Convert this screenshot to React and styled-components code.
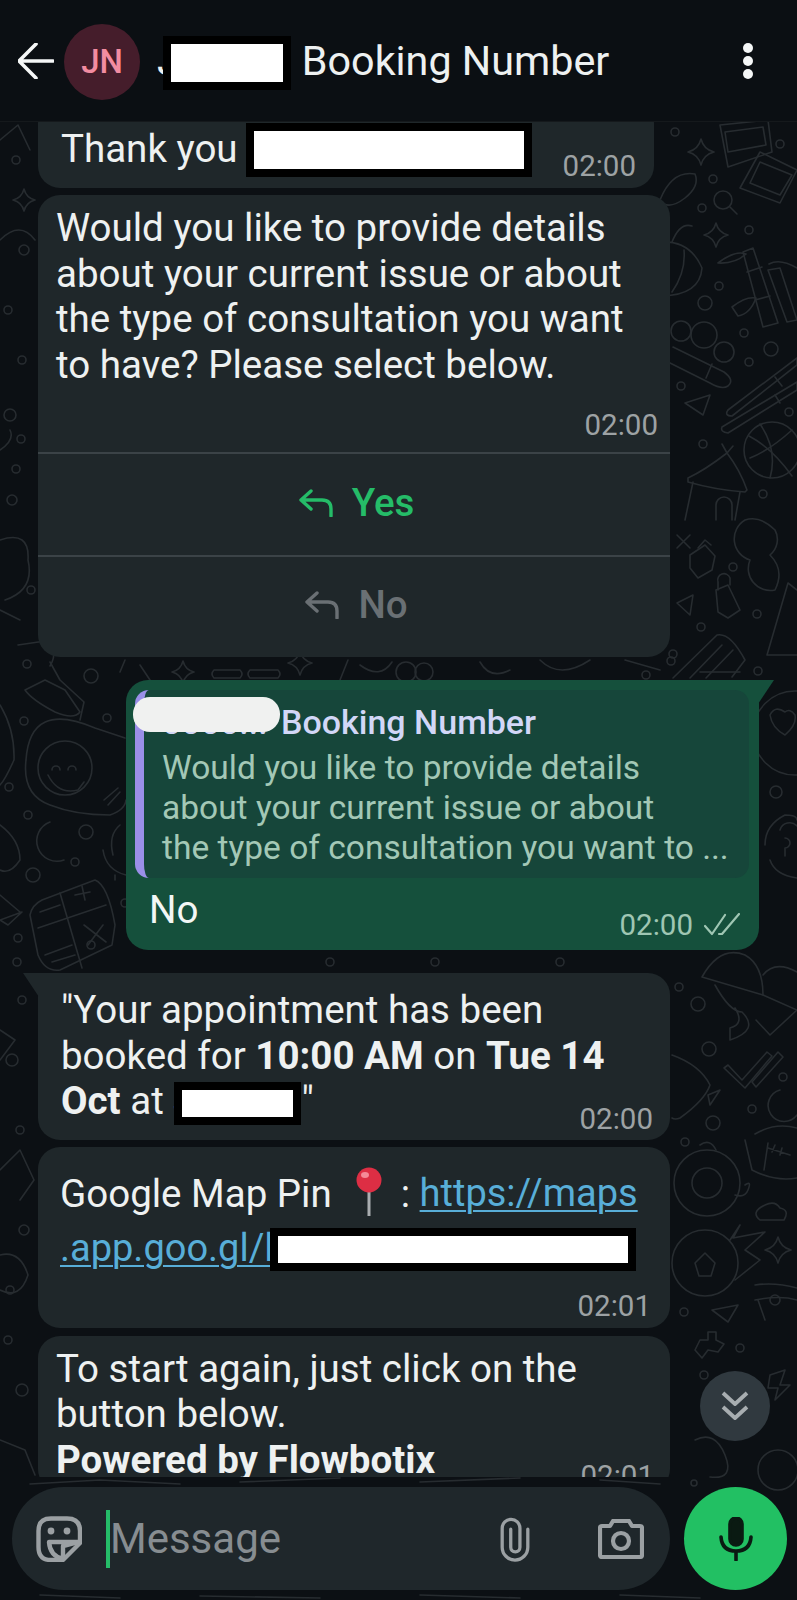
import React from 'react';
import styled, { createGlobalStyle } from 'styled-components';

const GlobalStyle = createGlobalStyle`
  html, body { margin: 0; padding: 0; background: #0c1014; }
  * { box-sizing: border-box; }
`;

const Page = styled.div`
  position: relative;
  width: 797px;
  height: 1600px;
  overflow: hidden;
  display: flex;
  flex-direction: column;
  background: #0c1014;
  color: #eef1f1;
  font-family: Roboto, "Liberation Sans", sans-serif;
`;

const Header = styled.header`
  position: relative;
  z-index: 2;
  height: 122px;
  flex: none;
  display: flex;
  align-items: center;
  padding: 0 0 0 18px;
  background: #0b0f13;
  border-bottom: 1px solid #15191c;
`;

const Avatar = styled.div`
  width: 76px;
  height: 76px;
  margin: 2px 0 0 10px;
  border-radius: 50%;
  display: flex;
  align-items: center;
  justify-content: center;
  background: #451d2b;
  color: #f28ca1;
  font-size: 33px;
  font-weight: 500;
`;

const ContactName = styled.div`
  margin-left: 17px;
  font-size: 41.3px;
  white-space: nowrap;
  display: flex;
  align-items: center;
`;

const Kebab = styled.svg`
  margin-left: auto;
  margin-right: 43px;
`;

const Main = styled.main`
  position: relative;
  flex: 1;
  display: flex;
  flex-direction: column;
  min-height: 0;
`;

const Wallpaper = styled.svg`
  position: absolute;
  inset: 0;
  fill: none;
  stroke: #272c30;
  stroke-width: 1.6;
  stroke-linecap: round;
  stroke-linejoin: round;
`;

const MessageList = styled.div`
  position: relative;
  height: 1355px;
  flex: none;
  overflow: hidden;
  display: flex;
  flex-direction: column;
`;

const Bubble = styled.div`
  position: relative;
  flex: none;
  margin-top: ${(p) => p.$gap}px;
  margin-left: ${(p) => p.$left || 38}px;
  width: ${(p) => p.$width || 632}px;
  padding: ${(p) => p.$pad || '10px 16px 0 18px'};
  border-radius: 22px;
  border-top-left-radius: ${(p) => (p.$tail === 'left' ? 0 : 22)}px;
  border-top-right-radius: ${(p) => (p.$tail === 'right' ? 0 : 22)}px;
  background: ${(p) => (p.$sent ? '#15503c' : '#1f272a')};
  font-size: 38.5px;
  line-height: 45.5px;
  &::before {
    content: ${(p) => (p.$tail ? '""' : 'none')};
    position: absolute;
    top: 0;
    width: 16px;
    height: 24px;
    background: inherit;
    ${(p) => (p.$tail === 'left'
      ? 'left: -15px; clip-path: polygon(0 0, 100% 0, 100% 100%);'
      : 'right: -15px; clip-path: polygon(0 0, 100% 0, 0 100%);')}
  }
`;

const BodyText = styled.div`
  padding-left: 18px;
`;

const Time = styled.div`
  display: flex;
  align-items: center;
  justify-content: flex-end;
  gap: 11px;
  height: 30px;
  margin-top: ${(p) => p.$top || 0}px;
  margin-right: ${(p) => p.$right || 0}px;
  font-size: 29.5px;
  line-height: 30px;
  color: ${(p) => (p.$sent ? '#9fc6b3' : '#9da2a4')};
`;

const Redact = styled.span`
  display: inline-block;
  flex: none;
  vertical-align: middle;
  width: ${(p) => p.$w}px;
  height: ${(p) => p.$h}px;
  margin: ${(p) => p.$mt ?? -12}px ${(p) => p.$right || 0}px ${(p) => p.$mb ?? -12}px ${(p) => p.$ml || 0}px;
  background: #fff;
  border: 8px solid #000;
`;

const ThanksRow = styled.div`
  display: flex;
  align-items: flex-start;
  height: 62px;
  padding-left: 23px;
  line-height: 46px;
`;

const ThanksTime = styled(Time)`
  margin: 25px 0 0 31px;
`;

const ButtonRow = styled.div`
  height: ${(p) => p.$h}px;
  margin-top: ${(p) => p.$top || 0}px;
  padding: 0 0 4px 5px;
  display: flex;
  align-items: center;
  justify-content: center;
  gap: 19px;
  border-top: 2px solid #3b4347;
  font-weight: 500;
  font-size: 38.5px;
  color: ${(p) => (p.$muted ? '#6a7074' : '#25bc68')};
`;

const Quote = styled.div`
  position: relative;
  height: 188px;
  padding: 10px 0 0 18px;
  border-left: 9px solid #9a8fe8;
  border-radius: 14px;
  background: #16463a;
  font-size: 33.5px;
  line-height: 40px;
  color: #a3c8b6;
  white-space: nowrap;
`;

const QuoteTitle = styled.div`
  font-weight: 500;
  font-size: 34px;
  line-height: 44px;
  height: 48px;
  color: #d2d7f7;
`;

const Blob = styled.span`
  position: absolute;
  left: -11px;
  top: 7px;
  width: 147px;
  height: 35px;
  border-radius: 17px;
  background: #f0f1f0;
`;

const QuoteNumber = styled.span`
  display: inline-block;
  width: 119px;
`;

const ReplyText = styled.div`
  display: flex;
  justify-content: space-between;
  height: 72px;
  padding: 10px 0 0 14px;
  line-height: 44px;
  color: #f2f7f5;
`;

const SentTime = styled(Time)`
  margin: 22px 9px 0 0;
`;

const Link = styled.span`
  color: #58aed8;
  font-size: 38px;
  text-decoration: underline;
  text-underline-offset: 4px;
  text-decoration-thickness: 2px;
`;

const PinLine = styled.div`
  display: flex;
  align-items: center;
  height: 55px;
`;

const Pin = styled.svg`
  margin: -6px 15px 0 20px;
`;

const ScrollButton = styled.button`
  position: absolute;
  left: 700px;
  top: 1249px;
  width: 70px;
  height: 70px;
  padding: 0;
  border: none;
  border-radius: 50%;
  display: flex;
  align-items: center;
  justify-content: center;
  background: #30393f;
`;

const Footer = styled.footer`
  position: relative;
  display: flex;
  gap: 14px;
  margin: 10px 0 0 12px;
`;

const Composer = styled.div`
  width: 658px;
  height: 103px;
  padding: 0 26px 0 24px;
  display: flex;
  align-items: center;
  border-radius: 52px;
  background: #1f272b;
`;

const Cursor = styled.span`
  width: 4px;
  height: 58px;
  margin-left: 24px;
  background: #25bc68;
`;

const Placeholder = styled.span`
  flex: 1;
  font-size: 42px;
  color: #878d91;
`;

const CameraIcon = styled.svg`
  margin-left: 68px;
`;

const MicButton = styled.button`
  width: 103px;
  height: 103px;
  padding: 0;
  border: none;
  border-radius: 50%;
  display: flex;
  align-items: center;
  justify-content: center;
  background: #22c063;
`;

const GhostLetter = styled.span`
  margin-right: ${(p) => p.$overlap}px;
`;

const star = (x, y, r) =>
  `M${x} ${y - r}Q${x + r * 0.2} ${y - r * 0.2} ${x + r} ${y}Q${x + r * 0.2} ${y + r * 0.2} ${x} ${y + r}Q${x - r * 0.2} ${y + r * 0.2} ${x - r} ${y}Q${x - r * 0.2} ${y - r * 0.2} ${x} ${y - r}Z`;

const dots = [
  [675,132,4],[780,144,4],[713,179,4],[702,208,4],[749,230,4],[719,286,4],[705,303,7],[744,333,4],[771,349,7],[749,362,4],
  [681,386,4],[789,412,4],[703,444,4],[763,494,4],[733,567,4],[757,614,4],[701,627,4],[673,654,4],[758,671,4],[776,792,6],
  [679,987,4],[698,1004,7],[709,1049,7],[783,1077,4],[752,1109,4],[713,1123,7],[685,1142,4],[684,1312,4],
  [27,664,4],[91,676,7],[24,721,4],[107,718,4],[9,787,4],[28,815,4],[86,832,7],[75,862,4],[33,875,7],[18,938,4],[17,962,4],
  [125,903,4],[10,415,6],[21,439,4],[16,469,4],[31,590,4],[12,500,5],[704,1375,4],[740,1348,4],[775,1300,5],[22,1000,4],
  [12,1060,6],[20,1130,4],[24,1230,5],[10,1290,4],[22,1390,6],[8,1340,4],[16,160,4],[24,250,5],[8,310,4],[22,360,4],
  [694,1483,3],[646,675,4],[671,661,4],[91,945,4],[435,962,4],[560,962,4],[330,962,4]
];

const rings = [
  [723,200,9],[772,450,28],[681,331,10],[704,335,13],[724,352,10],[707,1183,33],[707,1183,15],[705,1263,33],
  [65,768,27],[778,1470,20],[795,733,42],[406,672,10],[424,672,9]
];

const shapes = [
  star(701,152,13), star(716,235,12), star(778,1250,13), star(183,672,11), star(300,663,12), star(24,200,11),
  'M720 125L768 120L772 152L728 167Z', 'M725 132L763 127L766 145L728 152Z',
  'M760 152L797 170L780 203L740 188Z', 'M760 162L792 175L780 195L750 183Z',
  'M730 207L737 214', 'M660 200Q672 170 695 174Q700 186 685 198Q672 208 664 204',
  'M660 242Q690 240 702 268Q700 295 662 296', 'M672 242Q680 222 692 226', 'M684 250Q686 272 672 292',
  'M743 252L763 327L778 323L753 248Z', 'M747 272L762 267', 'M755 300L770 296',
  'M718 263Q735 250 746 254Q735 264 718 263', 'M732 307Q746 296 756 298Q750 314 738 316Z',
  'M768 270L787 322L797 320L780 268Z', 'M769 264Q780 258 797 268',
  'M673 347L724 372Q735 380 728 386Q722 390 710 383L664 360', 'M712 364L706 378',
  'M728 410L797 358L797 365L732 416Q724 416 728 410Z', 'M722 427L797 382L797 390L728 433Q720 432 722 427Z',
  'M775 377L782 386', 'M775 395L780 403',
  'M685 403L710 395L703 415Z', 'M749 436Q772 448 792 476', 'M750 458Q770 450 792 430', 'M760 424Q778 450 770 478',
  'M688 478Q705 470 727 453Q740 470 747 490L745 492Q716 490 688 482Z', 'M727 453L722 444M727 453L733 446',
  'M693 482L685 520M740 492L735 520', 'M716 520V505A8 8 0 0 1 732 505V520',
  'M677 535L690 548M690 535L677 548', 'M690 555L705 545L715 556L712 570L698 578L690 568Z', 'M698 548L705 540L711 545',
  'M716 590L728 585L740 610L728 618L718 612Z', 'M718 590V582A6 6 0 0 1 730 578V585',
  'M677 603L693 595L690 615Z', 'M745 520A22 22 0 0 0 750 560A22 22 0 0 0 775 590Q785 570 770 555A20 20 0 0 0 775 530Q760 515 745 520',
  'M767 655L788 583L797 590M767 655H797',
  'M673 678L717 635Q730 632 745 660L732 677', 'M690 678L722 645', 'M706 678L733 650',
  'M785 712Q775 705 770 715Q772 728 785 735Q797 725 795 715Q790 708 785 712Z',
  'M765 845Q765 825 785 815Q797 815 797 820M770 860Q775 875 797 878', 'M780 830A10 10 0 0 1 797 826', 'M785 838A5 5 0 1 1 785 848V856',
  'M702 977Q720 945 745 955Q763 965 763 995Z', 'M715 985Q730 1012 742 1012Q760 1030 730 1040L730 1028Q745 1024 735 1008',
  'M763 975Q775 960 797 972', 'M763 995L797 1010L770 1035L756 1020',
  'M728 1065L742 1080L767 1052L772 1056L745 1088L724 1068Z', 'M752 1082L778 1052L783 1057L756 1087Z',
  'M780 1090A16 16 0 1 0 797 1115', 'M672 1055Q700 1065 710 1085Q705 1100 680 1118Q675 1120 672 1118', 'M708 1095L720 1090L710 1105Z',
  'M755 1134Q775 1122 797 1128M745 1140L752 1170Q775 1182 797 1178', 'M768 1143L764 1170', 'M768 1148L790 1155M775 1145L772 1152M782 1148L780 1155',
  'M700 1145Q710 1138 716 1150', 'M745 1185Q752 1180 748 1190Q745 1198 735 1195', 'M765 1205Q775 1200 780 1208Q790 1210 784 1220H760Q750 1212 765 1205Z',
  'M695 1263L705 1253L715 1263L711 1276H699Z', 'M730 1240L740 1225L733 1238L765 1232L745 1250L760 1260L735 1280',
  'M755 1285Q775 1282 797 1288M755 1300Q780 1295 797 1300M758 1300L765 1320',
  'M712 1310L738 1305L728 1322Z', 'M700 1340L708 1340L708 1332L716 1332L716 1340L724 1344L718 1352L708 1350L702 1358L695 1350Z',
  'M770 1375L785 1370L780 1385L790 1385L775 1400L778 1388H768Z', 'M695 1440Q715 1430 725 1455Q735 1480 710 1477',
  'M18 645L120 630', 'M45 680L65 690L80 712Q74 720 55 712Q32 700 25 690Z', 'M50 662L60 680L84 702L80 720',
  'M43 640Q60 650 50 666', 'M26 760Q30 700 95 728L125 738', 'M26 760Q22 795 50 805Q75 815 110 815Q125 810 126 800',
  'M52 770A4 4 0 0 1 60 770', 'M68 770A4 4 0 0 1 76 770', 'M48 775Q58 795 78 790L84 782', 'M104 800L118 788M108 805L120 792',
  'M50 822A20 20 0 1 0 64 860A16 16 0 0 1 50 822Z', 'M0 825Q20 840 20 860Q10 875 0 870',
  'M0 705Q15 730 14 760Q5 780 0 785', 'M120 825Q108 835 113 855M103 850Q106 870 126 875M115 875V880',
  'M42 900L95 880Q108 885 115 925L112 945L60 970Q45 972 38 955L30 915Q32 905 42 900Z', 'M60 893L82 968', 'M38 928L106 905',
  'M40 912L60 905', 'M75 895L90 892M82 886L85 900', 'M84 925L106 942M103 925L88 945',
  'M45 955L72 945M52 962L75 955', 'M0 920L22 912L8 925Z', 'M0 895L20 912',
  'M0 540Q30 530 28 560Q35 590 5 600M0 610L20 620', 'M0 450Q15 440 10 430', 'M0 240Q20 220 35 240', 'M0 140L18 125L30 150',
  'M0 1030L15 1040L0 1060', 'M0 1170L20 1150L34 1180L20 1200', 'M0 1255Q20 1250 28 1275Q20 1300 0 1290', 'M0 1440L25 1450L35 1475',
  'M214 670H240Q244 674 240 678H214Q210 674 214 670ZM250 670H278Q282 674 278 678H250Q246 674 250 670Z',
  'M120 672L125 660M140 665L150 680', 'M348 660L340 680M360 665Q380 680 392 662', 'M480 662Q490 680 510 670',
  'M540 660Q560 680 590 660', 'M625 660L660 670M700 672H740',
  'M30 1484L100 1480L180 1484M240 1482L340 1478M420 1482L520 1478M600 1480L660 1484',
  'M40 1595L120 1598M200 1596L320 1598M420 1595L520 1598M620 1595L700 1598',
];

function Doodles() {
  return (
    <Wallpaper width="797" height="1478" viewBox="0 122 797 1478">
      {dots.concat(rings).map(([x, y, r], i) => <circle key={i} cx={x} cy={y} r={r} />)}
      {shapes.map((d, i) => <path key={i} d={d} />)}
    </Wallpaper>
  );
}

function ReplyIcon({ color }) {
  return (
    <svg width="34" height="28" viewBox="0 0 34 28" fill="none" stroke={color} strokeWidth="3.4" strokeLinecap="round" strokeLinejoin="round">
      <path d="M12 2L2 11L12 20M2 11H23Q32 11 32 20V27" />
    </svg>
  );
}

function ReadTicks() {
  return (
    <svg width="36" height="24" viewBox="0 0 36 24" fill="none" stroke="#9fc6b3" strokeWidth="2.2" strokeLinecap="round" strokeLinejoin="round">
      <path d="M1 13L8 21L21 2M15 21H18L35 1" />
    </svg>
  );
}

export default function App() {
  return (
    <Page>
      <GlobalStyle />
      <Header>
        <svg width="36" height="36" viewBox="0 0 36 36" fill="none" stroke="#f5f7f7" strokeWidth="3.6" strokeLinecap="round" strokeLinejoin="round">
          <path d="M35 18H2M18 1L1 18L18 35" />
        </svg>
        <Avatar>JN</Avatar>
        <ContactName>
          <GhostLetter $overlap={-17}>J</GhostLetter>
          <Redact $w={128} $h={54} $right={11} $mt={-10} $mb={-14} />
          Booking Number
        </ContactName>
        <Kebab width="12" height="38" viewBox="0 0 12 38" fill="#f5f7f7">
          <circle cx="6" cy="6" r="5" />
          <circle cx="6" cy="19" r="5" />
          <circle cx="6" cy="32" r="5" />
        </Kebab>
      </Header>
      <Main>
        <Doodles />
        <MessageList>
          <Bubble $gap={-20} $width={616} $pad="24px 0 0 0">
            <ThanksRow>
              Thank you
              <Redact $w={286} $h={54} $ml={8} $mt={-3} $mb={0} />
              <ThanksTime>02:00</ThanksTime>
            </ThanksRow>
          </Bubble>

          <Bubble $gap={7} $pad="10px 0 0 0">
            <BodyText>
              Would you like to provide details<br />
              about your current issue or about<br />
              the type of consultation you want<br />
              to have? Please select below.
            </BodyText>
            <Time $top={23} $right={12}>02:00</Time>
            <ButtonRow $h={103} $top={12}>
              <ReplyIcon color="#25bc68" />Yes
            </ButtonRow>
            <ButtonRow $h={102} $muted>
              <ReplyIcon color="#6a7074" />No
            </ButtonRow>
          </Bubble>

          <Bubble $gap={23} $left={126} $width={633} $sent $tail="right" $pad="10px 10px 0 9px">
            <Quote>
              <QuoteTitle>
                <QuoteNumber>0000...</QuoteNumber>Booking Number
              </QuoteTitle>
              <Blob />
              Would you like to provide details<br />
              about your current issue or about<br />
              the type of consultation you want to ...
            </Quote>
            <ReplyText>
              No
              <SentTime $sent>
                02:00
                <ReadTicks />
              </SentTime>
            </ReplyText>
          </Bubble>

          <Bubble $gap={23} $tail="left" $pad="14px 17px 6px 23px">
            "Your appointment has been<br />
            booked for <b>10:00 AM</b> on <b>Tue 14</b><br />
            <b>Oct</b> at <GhostLetter $overlap={-21}>J</GhostLetter><Redact $w={127} $h={43} $right={1} />"
            <Time $top={-20}>02:00</Time>
          </Bubble>

          <Bubble $gap={7} $pad="20px 19px 7px 22px">
            <PinLine>
              Google Map Pin
              <Pin width="34" height="50" viewBox="0 0 34 50">
                <rect x="15.5" y="22" width="3" height="28" fill="#a9adb0" />
                <circle cx="17" cy="14" r="12.5" fill="#dd2e44" />
                <ellipse cx="13" cy="9" rx="4" ry="3" fill="#f58a98" />
              </Pin>
              :&nbsp;<Link>https://maps</Link>
            </PinLine>
            <PinLine>
              <Link>.app.goo.gl/l</Link>
              <Redact $w={366} $h={43} $ml={-4} />
            </PinLine>
            <Time $top={14}>02:01</Time>
          </Bubble>

          <Bubble $gap={8} $pad="10px 16px 0 18px">
            To start again, just click on the<br />
            button below.<br />
            <b>Powered by Flowbotix</b>
            <Time $top={-21}>02:01</Time>
          </Bubble>
        </MessageList>

        <ScrollButton aria-label="Scroll to bottom">
          <svg width="28" height="30" viewBox="0 0 28 30" fill="none" stroke="#a8aeb1" strokeWidth="3.8" strokeLinejoin="round">
            <path d="M2 2L14 13L26 2M2 16L14 27L26 16" />
          </svg>
        </ScrollButton>

        <Footer>
          <Composer>
            <svg width="46" height="46" viewBox="0 0 46 46" fill="none" stroke="#9ba0a3" strokeWidth="4.4" strokeLinejoin="round">
              <path d="M15 2.5H31Q44 2.5 44 15V27L27 44H15Q2.5 44 2.5 31V15Q2.5 2.5 15 2.5Z" />
              <path d="M13 26H42L27 30Q27 38 27 43Q14 40 13 26Z" />
              <circle cx="15" cy="15" r="3.4" fill="#9ba0a3" stroke="none" />
              <circle cx="31" cy="15" r="3.4" fill="#9ba0a3" stroke="none" />
            </svg>
            <Cursor />
            <Placeholder>Message</Placeholder>
            <svg width="30" height="46" viewBox="28 55 90 140" fill="none" stroke="#9ba0a3" strokeWidth="10" strokeLinecap="round">
              <path d="M112 95V150A39 39 0 0 1 34 150V92A27 27 0 0 1 88 92V150A14 14 0 0 1 60 150V95" />
            </svg>
            <CameraIcon width="46" height="40" viewBox="0 0 46 40" fill="none" stroke="#9ba0a3" strokeWidth="4.2" strokeLinejoin="round">
              <path d="M2 9Q2 7 4 7H12L15 2H31L34 7H42Q44 7 44 9V36Q44 38 42 38H4Q2 38 2 36Z" />
              <circle cx="23" cy="22" r="8" />
            </CameraIcon>
          </Composer>
          <MicButton aria-label="Record voice message">
            <svg width="34" height="44" viewBox="0 0 34 44" fill="none" stroke="#0a1a12" strokeWidth="3.6" strokeLinecap="round">
              <rect x="11" y="1" width="12" height="27" rx="6" fill="#0a1a12" />
              <path d="M2 20Q3 34 17 34Q31 34 32 20M17 34V43" />
            </svg>
          </MicButton>
        </Footer>
      </Main>
    </Page>
  );
}
